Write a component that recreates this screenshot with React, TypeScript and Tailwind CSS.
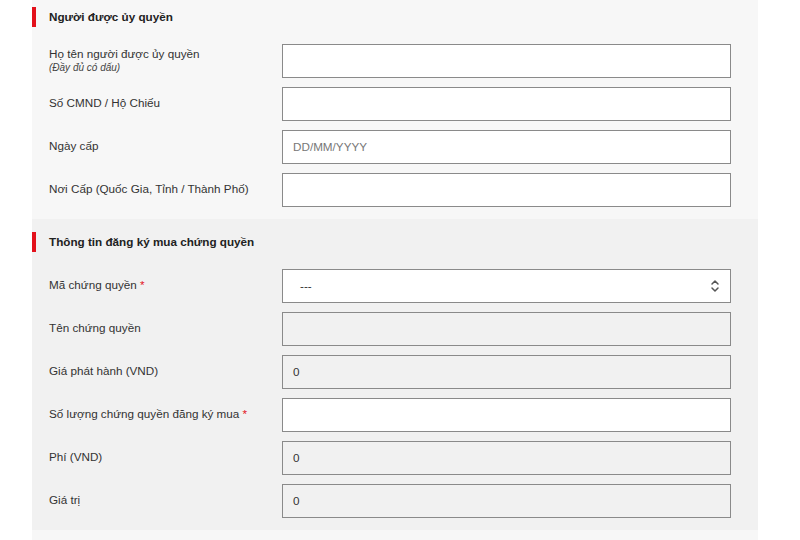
import React from "react"

const Header = ({ title }: { title: string }) => (
  <div className="flex items-center h-[20px] mb-[17px]">
    <div className="w-[4px] h-full bg-[#e3111b]" />
    <h3 className="ml-[13px] text-[11.7px] font-bold text-[#222] pb-[1px]">{title}</h3>
  </div>
)

const Row = ({ label, sub, required, children }: { label: string, sub?: string, required?: boolean, children: React.ReactNode }) => (
  <div className="flex items-center">
    <div className="w-[250px] pl-[17px] pb-[3px] text-[11.7px] text-[#333] leading-[15px]">
      <div>
        {label}
        {required && <span className="text-[#e3111b]"> *</span>}
      </div>
      {sub && <div className="text-[10px] italic text-[#444] leading-[13px]">{sub}</div>}
    </div>
    <div className="w-[449px]">{children}</div>
  </div>
)

const Input = ({ value, placeholder, readOnly }: { value?: string, placeholder?: string, readOnly?: boolean }) => (
  <div
    className={
      "h-[34px] border border-[#8a8a8a] flex items-center px-[10px] text-[11.7px] " +
      (readOnly ? "bg-[#f1f1f1] text-[#333]" : "bg-white text-[#333]")
    }
  >
    {value ? <span>{value}</span> : placeholder ? <span className="text-[#777]">{placeholder}</span> : null}
  </div>
)

const Select = () => (
  <div className="h-[34px] border border-[#8a8a8a] bg-white flex items-center justify-between pl-[17px] pr-[10px] text-[11.7px] text-[#333]">
    <span>---</span>
    <svg width="10" height="14" viewBox="0 0 10 14" fill="none" stroke="#555" strokeWidth="1.5" strokeLinecap="round" strokeLinejoin="round">
      <path d="M2 5 L5 2 L8 5" />
      <path d="M2 9 L5 12 L8 9" />
    </svg>
  </div>
)

export default function App() {
  return (
    <main className="w-[800px] h-[540px] overflow-hidden bg-white" style={{ fontFamily: '"Liberation Sans", Arial, sans-serif' }}>
      <div className="ml-[32px] w-[726px]">
        {/* Authorized person */}
        <section className="bg-[#f7f7f7] pt-[7px] pb-[12px]">
          <Header title="Người được ủy quyền" />
          <div className="flex flex-col gap-[9px]">
            <Row label="Họ tên người được ủy quyền" sub="(Đầy đủ có dấu)">
              <Input />
            </Row>
            <Row label="Số CMND / Hộ Chiếu">
              <Input />
            </Row>
            <Row label="Ngày cấp">
              <Input placeholder="DD/MM/YYYY" />
            </Row>
            <Row label="Nơi Cấp (Quốc Gia, Tỉnh / Thành Phố)">
              <Input />
            </Row>
          </div>
        </section>

        {/* Warrant registration */}
        <section className="bg-[#f1f1f1] pt-[13px] pb-[12px]">
          <Header title="Thông tin đăng ký mua chứng quyền" />
          <div className="flex flex-col gap-[9px]">
            <Row label="Mã chứng quyền" required>
              <Select />
            </Row>
            <Row label="Tên chứng quyền">
              <Input readOnly />
            </Row>
            <Row label="Giá phát hành (VND)">
              <Input readOnly value="0" />
            </Row>
            <Row label="Số lượng chứng quyền đăng ký mua" required>
              <Input />
            </Row>
            <Row label="Phí (VND)">
              <Input readOnly value="0" />
            </Row>
            <Row label="Giá trị">
              <Input readOnly value="0" />
            </Row>
          </div>
        </section>

        <section className="bg-[#f7f7f7] h-[40px]" />
      </div>
    </main>
  )
}
